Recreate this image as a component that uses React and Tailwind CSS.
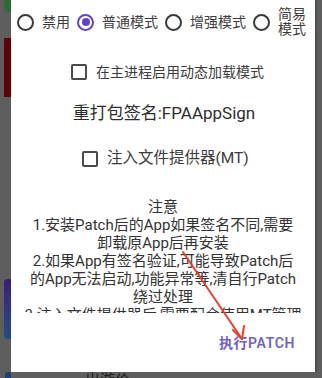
import React from "react";

const font = {
  fontFamily: 'Roboto, "Noto Sans CJK SC", "Noto Sans", sans-serif',
};

const modes = [
  { label: "禁用", checked: false },
  { label: "普通模式", checked: true },
  { label: "增强模式", checked: false },
  { label: "简易模式", checked: false, narrow: true },
];

const notes = [
  "注意",
  "1.安装Patch后的App如果签名不同,需要",
  "卸载原App后再安装",
  "2.如果App有签名验证,可能导致Patch后",
  "的App无法启动,功能异常等,清自行Patch",
  "绕过处理",
  "3.注入文件提供器后,需要配合使用MT管理",
  "器访问数据目录",
];

const Radio = ({ checked }) => (
  <span
    className={`w-[17px] h-[17px] shrink-0 rounded-full border-2 flex items-center justify-center ${
      checked ? "border-[#5d45c7]" : "border-[#3a3a3a]"
    }`}
  >
    {checked && <span className="w-[8px] h-[8px] rounded-full bg-[#5d45c7]" />}
  </span>
);

const Checkbox = () => (
  <span className="w-[16px] h-[16px] shrink-0 rounded-[2px] border-2 border-[#4a4a4a]" />
);

export default function App() {
  return (
    <div
      className="w-[322px] h-[378px] overflow-hidden bg-[#5e5e5e] flex flex-col"
      style={font}
    >
      <div className="flex h-[372px] shrink-0">
        {/* background page strip on the left */}
        <div className="w-[11px] shrink-0 pl-[4px] flex flex-col">
          <div className="w-[7px] h-[12px] rounded-bl-[4px] bg-[#2f6b35]" />
          <div className="w-[7px] h-[59px] mt-[26px] bg-[#5f0306]" />
          <div className="w-[7px] h-[60px] mt-[182px] rounded-l-[4px] bg-gradient-to-b from-[#3a1b78] to-[#1f4d86]" />
        </div>

        {/* dialog */}
        <div className="relative w-[304px] h-[372px] bg-white flex flex-col text-[#3c3c3c]">
          <div className="flex items-center gap-[7px] pl-[6px] pt-[8px] h-[36px]">
            {modes.map((m) => (
              <div key={m.label} className="flex items-center gap-[8px]">
                <Radio checked={m.checked} />
                <span
                  className={`text-[14px] ${
                    m.narrow ? "w-[28px] leading-[15px]" : "whitespace-nowrap leading-[20px]"
                  }`}
                >
                  {m.label}
                </span>
              </div>
            ))}
          </div>

          <div className="mt-[24px] h-[24px] flex items-center gap-[9px] pl-[60px]">
            <Checkbox />
            <span className="text-[14px] whitespace-nowrap">在主进程启用动态加载模式</span>
          </div>

          <div className="mt-[18px] h-[24px] flex items-center justify-center text-[17px] text-[#2e2e2e] pl-[2px]">
            重打包签名:FPAAppSign
          </div>

          <div className="mt-[21px] h-[24px] flex items-center gap-[9px] pl-[71px]">
            <Checkbox />
            <span className="text-[15.5px] whitespace-nowrap">注入文件提供器(MT)</span>
          </div>

          <div className="mt-[27px] h-[115px] overflow-hidden text-center text-[15px] leading-[18px] text-[#333]">
            {notes.map((line) => (
              <div key={line} className="whitespace-nowrap">
                {line}
              </div>
            ))}
          </div>

          <div className="mt-[20px] h-[20px] flex items-center justify-end pr-[20px]">
            <span className="text-[14px] font-semibold tracking-[0.6px] text-[#7262c2]">
              执行PATCH
            </span>
          </div>

          {/* red annotation arrow drawn over the dialog */}
          <svg
            className="absolute left-0 top-0 pointer-events-none"
            width="304"
            height="372"
            viewBox="0 0 304 372"
          >
            <g stroke="#e8402a" strokeWidth="2" strokeLinecap="round" fill="none">
              <line x1="172" y1="252" x2="231" y2="339" />
              <line x1="231" y1="339" x2="222" y2="330" />
              <line x1="231" y1="339" x2="233" y2="326" />
            </g>
          </svg>
        </div>

        <div className="w-[2px] shrink-0 bg-[#4e4e4e]" />
      </div>

      {/* bottom strip of the page behind */}
      <div className="flex h-[6px] overflow-hidden">
        <div className="w-[11px] pl-[5px]">
          <div className="w-[6px] h-[10px] rounded-tl-[3px] bg-[#1d3f7a]" />
        </div>
        <div className="ml-[74px] text-[15px] leading-[16px] text-[#1c1c1c] whitespace-nowrap">
          出游价
        </div>
      </div>
    </div>
  );
}
